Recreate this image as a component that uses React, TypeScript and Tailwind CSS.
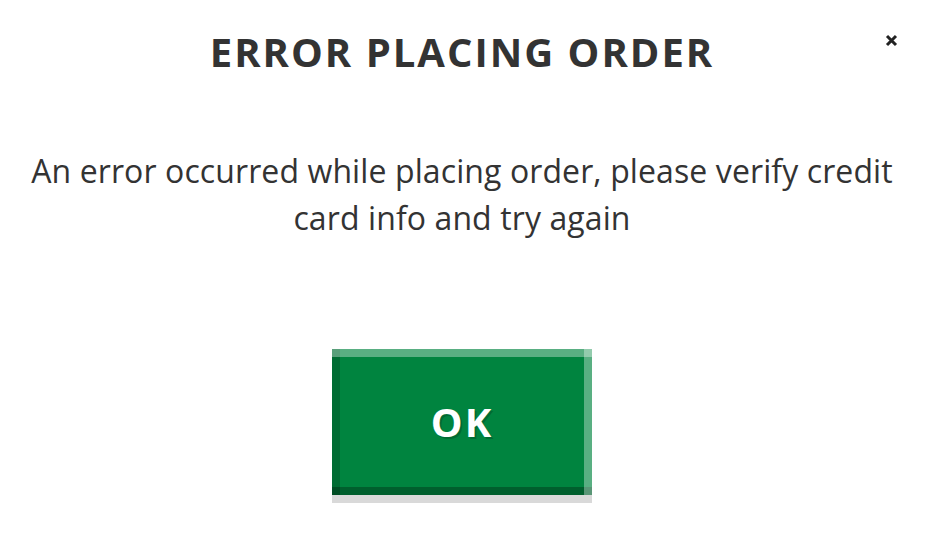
export default function App() {
  return (
    <div
      className="relative w-[930px] h-[541px] bg-white text-[#333333] pl-[14px] pr-[20px]"
      style={{ fontFamily: '"Open Sans", sans-serif' }}
    >
      <button className="absolute right-[32px] top-[33px] w-[14px] h-[14px] flex items-center justify-center">
        <svg width="13" height="13" viewBox="0 0 13 13">
          <path d="M2 2L11 11M11 2L2 11" stroke="#222" strokeWidth="3" strokeLinecap="butt" />
        </svg>
      </button>
      <div className="flex flex-col items-center">
        <h1 className="mt-[27px] text-[40px] leading-[50px] font-bold tracking-[2px] text-center">
          ERROR PLACING ORDER
        </h1>
        <p className="mt-[70px] text-[32px] leading-[47px] tracking-[0.1px] text-center">
          An error occurred while placing order, please verify credit card info and try again
        </p>
        <button
          className="mt-[108px] w-[260px] h-[146px] bg-[#00843f] text-white text-[40px] leading-[60px] font-bold tracking-[2px] flex items-center justify-center shadow-[inset_0_8px_0_rgba(255,255,255,0.35),inset_-8px_0_0_rgba(255,255,255,0.35),inset_8px_0_0_rgba(0,0,0,0.18),inset_0_-8px_0_rgba(0,0,0,0.28),0_8px_0_#d9d9d9]"
          style={{ textShadow: '2px 2px 0 #006b33' }}
        >
          OK
        </button>
      </div>
    </div>
  );
}
